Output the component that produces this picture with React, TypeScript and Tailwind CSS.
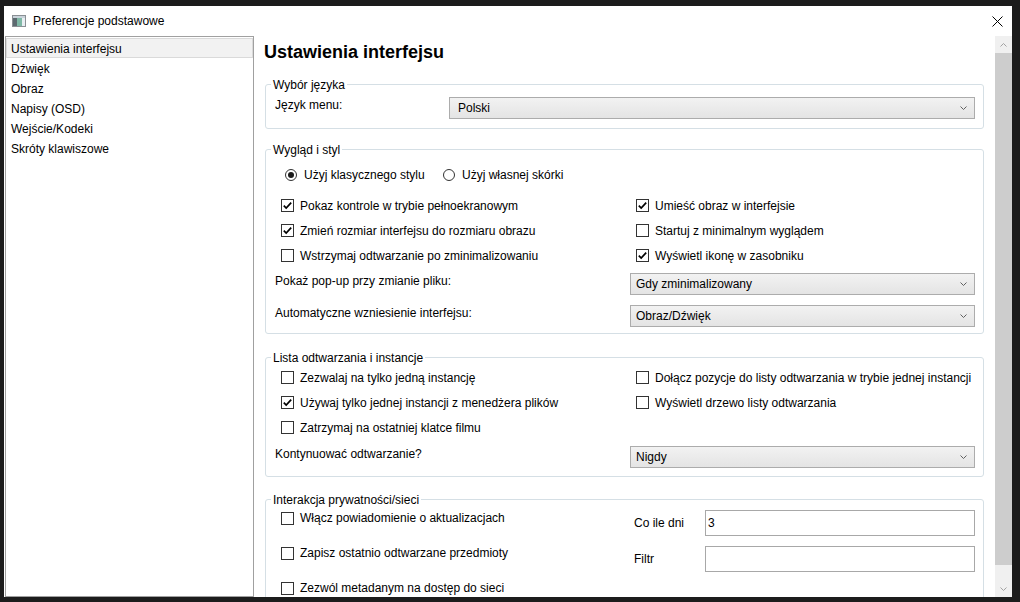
import React from "react";

// ── Small controls ─────────────────────────────────────────────────────────

function Chevron({ up = false, color = "#606060" }: { up?: boolean; color?: string }) {
  return (
    <svg width="7" height="4" viewBox="0 0 7 4" className="shrink-0">
      <path
        d={up ? "M0.5 3.5 L3.5 0.5 L6.5 3.5" : "M0.5 0.5 L3.5 3.5 L6.5 0.5"}
        fill="none"
        stroke={color}
        strokeWidth="1"
      />
    </svg>
  );
}

function CheckBox({ checked = false, label }: { checked?: boolean; label: string }) {
  return (
    <div className="flex h-[25px] items-center">
      <span className="flex h-[13px] w-[13px] shrink-0 items-center justify-center border border-[#333333] bg-white">
        {checked && (
          <svg width="11" height="11" viewBox="0 0 11 11">
            <path d="M1.8 5.6 L4.2 8 L9.2 2.6" fill="none" stroke="#000" strokeWidth="1.7" />
          </svg>
        )}
      </span>
      <span className="ml-[6px] whitespace-nowrap">{label}</span>
    </div>
  );
}

function Radio({ checked = false, label, className = "" }: { checked?: boolean; label: string; className?: string }) {
  return (
    <div className={`flex items-center ${className}`}>
      <span className="flex h-[12px] w-[12px] shrink-0 items-center justify-center rounded-full border border-[#333333] bg-white">
        {checked && <span className="h-[6px] w-[6px] rounded-full bg-[#1a1a1a]" />}
      </span>
      <span className="ml-[7px] whitespace-nowrap">{label}</span>
    </div>
  );
}

function Select({ value, first = false }: { value: string; first?: boolean }) {
  return (
    <div
      className={[
        "flex h-[22px] flex-1 items-center justify-between border border-[#acacac] bg-linear-to-b from-[#f2f2f2] to-[#e4e4e4] pr-[7px]",
        first ? "pl-[8px]" : "pl-[5px]",
      ].join(" ")}
    >
      <span>{value}</span>
      <Chevron />
    </div>
  );
}

function TextInput({ value = "" }: { value?: string }) {
  return (
    <div className="flex h-[26px] flex-1 items-center border border-[#a8a8a8] bg-white pl-[2px]">
      {value}
    </div>
  );
}

function Group({ title, className = "", children }: { title: string; className?: string; children: React.ReactNode }) {
  return (
    <fieldset className={`mx-[11px] rounded-[3px] border border-[#d5dfe5] ${className}`}>
      <legend className="ml-[5px] px-[2px] leading-[16px]">
        <span className="relative top-[1px]">{title}</span>
      </legend>
      <div className="pl-[9px] pr-[8px]">{children}</div>
    </fieldset>
  );
}

function LabeledSelect({ label, value }: { label: string; value: string }) {
  return (
    <div className="grid grid-cols-[355px_1fr] items-start">
      <span className="leading-[16px]">{label}</span>
      <Select value={value} />
    </div>
  );
}

// ── Window pieces ──────────────────────────────────────────────────────────

function PrefsIcon() {
  return (
    <svg width="14" height="12" viewBox="0 0 14 12" className="shrink-0">
      <rect x="0.5" y="0.5" width="13" height="11" fill="#f4f6f8" stroke="#8a8f94" />
      <rect x="1" y="1" width="12" height="2" fill="#c9d3da" />
      <rect x="1" y="3" width="4" height="8" fill="#5d6a70" />
      <rect x="5" y="3" width="5" height="8" fill="#7fb8a6" />
      <rect x="10" y="3" width="3" height="8" fill="#e8eef2" />
    </svg>
  );
}

const sections = ["Ustawienia interfejsu", "Dźwięk", "Obraz", "Napisy (OSD)", "Wejście/Kodeki", "Skróty klawiszowe"];

export default function App() {
  return (
    <div className="h-[602px] w-[1020px] overflow-hidden bg-[#1c1c1c] pl-[4px] pt-[6px] font-['Liberation_Sans',Arial,sans-serif] text-[12px] leading-[16px] text-black">
      <div className="flex h-[591px] w-[1008px] flex-col bg-white">
        {/* Title bar */}
        <div className="flex h-[30px] shrink-0 items-center">
          <span className="ml-[8px] flex">
            <PrefsIcon />
          </span>
          <span className="ml-[7px]">Preferencje podstawowe</span>
          <svg width="11" height="11" viewBox="0 0 11 11" className="ml-auto mr-[9px]">
            <path d="M0.5 0.5 L10.5 10.5 M10.5 0.5 L0.5 10.5" stroke="#000" strokeWidth="1" />
          </svg>
        </div>

        {/* Body */}
        <div className="flex min-h-0 flex-1">
          {/* Section tree */}
          <div className="ml-[1px] w-[249px] shrink-0 border border-[#a0a0a0] pt-[1px]">
            {sections.map((s, i) => (
              <div
                key={s}
                className={[
                  "flex h-[20px] items-center pl-[4px] pt-[2px]",
                  i === 0 ? "border border-[#dadada] bg-[#f2f2f2]" : "border border-transparent",
                ].join(" ")}
              >
                {s}
              </div>
            ))}
          </div>

          {/* Settings pane */}
          <div className="w-[741px] shrink-0 overflow-hidden">
            <h1 className="pl-[10px] pt-[4px] text-[18px] font-bold leading-[24px]">Ustawienia interfejsu</h1>

            <Group title="Wybór języka" className="mt-[12px]">
              <div className="mt-[5px] flex items-start pb-[9px]">
                <span className="w-[174px] leading-[16px]">Język menu:</span>
                <Select value="Polski" first />
              </div>
            </Group>

            <Group title="Wygląd i styl" className="mt-[12px]">
              <div className="mt-[6px] flex h-[24px] items-center pl-[10px]">
                <Radio checked label="Użyj klasycznego stylu" className="w-[158px]" />
                <Radio label="Użyj własnej skórki" />
              </div>
              <div className="mt-[6px] grid grid-cols-[355px_1fr] pl-[6px]">
                <CheckBox checked label="Pokaz kontrole w trybie pełnoekranowym" />
                <CheckBox checked label="Umieść obraz w interfejsie" />
                <CheckBox checked label="Zmień rozmiar interfejsu do rozmiaru obrazu" />
                <CheckBox label="Startuj z minimalnym wyglądem" />
                <CheckBox label="Wstrzymaj odtwarzanie po zminimalizowaniu" />
                <CheckBox checked label="Wyświetl ikonę w zasobniku" />
              </div>
              <div className="mt-[5px]">
                <LabeledSelect label="Pokaż pop-up przy zmianie pliku:" value="Gdy zminimalizowany" />
              </div>
              <div className="mt-[10px] pb-[6px]">
                <LabeledSelect label="Automatyczne wzniesienie interfejsu:" value="Obraz/Dźwięk" />
              </div>
            </Group>

            <Group title="Lista odtwarzania i instancje" className="mt-[15px]">
              <div className="grid grid-cols-[355px_1fr] pl-[6px]">
                <CheckBox label="Zezwalaj na tylko jedną instancję" />
                <CheckBox label="Dołącz pozycje do listy odtwarzania w trybie jednej instancji" />
                <CheckBox checked label="Używaj tylko jednej instancji z menedżera plików" />
                <CheckBox label="Wyświetl drzewo listy odtwarzania" />
                <CheckBox label="Zatrzymaj na ostatniej klatce filmu" />
              </div>
              <div className="mt-[6px] pb-[8px]">
                <LabeledSelect label="Kontynuować odtwarzanie?" value="Nigdy" />
              </div>
            </Group>

            <Group title="Interakcja prywatności/sieci" className="mt-[14px]">
              <div className="grid grid-cols-[353px_1fr] pb-[20px] pl-[6px] pt-[3px]">
                <div className="flex flex-col gap-[19px] [&>div]:h-[16px]">
                  <CheckBox label="Włącz powiadomienie o aktualizacjach" />
                  <CheckBox label="Zapisz ostatnio odtwarzane przedmioty" />
                  <CheckBox label="Zezwól metadanym na dostęp do sieci" />
                </div>
                <div className="flex flex-col gap-[10px]">
                  <div className="flex items-center">
                    <span className="w-[71px]">Co ile dni</span>
                    <TextInput value="3" />
                  </div>
                  <div className="flex items-center">
                    <span className="w-[71px]">Filtr</span>
                    <TextInput />
                  </div>
                </div>
              </div>
            </Group>
          </div>

          {/* Scrollbar */}
          <div className="flex w-[17px] shrink-0 flex-col bg-[#f0f0f0]">
            <div className="flex h-[17px] items-center justify-center">
              <Chevron up color="#a3a3a3" />
            </div>
            <div className="h-[512px] bg-[#cdcdcd]" />
            <div className="mt-auto flex h-[17px] items-center justify-center">
              <Chevron color="#a3a3a3" />
            </div>
          </div>
        </div>
      </div>
    </div>
  );
}
